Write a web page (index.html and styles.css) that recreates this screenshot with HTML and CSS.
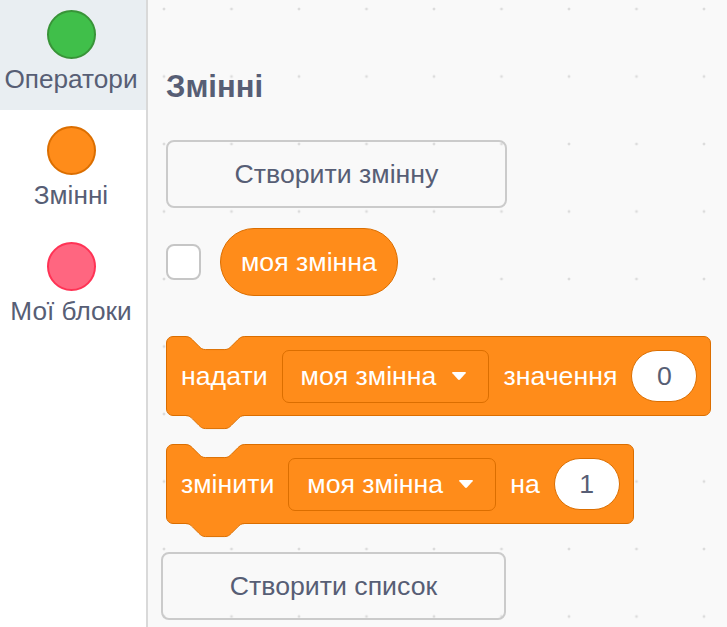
FILE: index.html
```html
<!DOCTYPE html>
<html lang="uk">
<head>
<meta charset="utf-8">
<title>Змінні</title>
<link rel="stylesheet" href="styles.css">
</head>
<body>
<div class="app">
  <nav class="cats">
    <div class="cats-list">
      <div class="cat cat-selected"><span class="dot dot-op"></span><span class="cat-label">Оператори</span></div>
      <div class="cat"><span class="dot dot-var"></span><span class="cat-label">Змінні</span></div>
      <div class="cat"><span class="dot dot-my"></span><span class="cat-label">Мої блоки</span></div>
    </div>
  </nav>
  <main class="palette">
    <h2 class="heading">Змінні</h2>
    <button class="fbtn">Створити змінну</button>
    <div class="var-row">
      <span class="checkbox"></span>
      <span class="reporter">моя змінна</span>
    </div>
    <div class="block">
      <svg class="notch" viewBox="0 -1 36 10" preserveAspectRatio="none"><path class="notch-fill" d="M0,-1 V0 c2,0 3,1 4,2 l4,4 c1,1 2,2 4,2 h12 c2,0 3,-1 4,-2 l4,-4 c1,-1 2,-2 4,-2 V-1 Z"/><path class="edge" d="M0,0 c2,0 3,1 4,2 l4,4 c1,1 2,2 4,2 h12 c2,0 3,-1 4,-2 l4,-4 c1,-1 2,-2 4,-2"/></svg>
      <span class="blabel">надати</span>
      <span class="dropdown">моя змінна<svg class="caret" viewBox="0 0 16 10"><path d="M2,1 H14 Q15.6,1 14.6,2.3 L9.2,8.3 Q8,9.5 6.8,8.3 L1.4,2.3 Q0.4,1 2,1 Z"/></svg></span>
      <span class="blabel">значення</span>
      <span class="num">0</span>
      <svg class="tab" viewBox="0 -1 36 10" preserveAspectRatio="none"><path class="tab-fill" d="M0,-1 V0 c2,0 3,1 4,2 l4,4 c1,1 2,2 4,2 h12 c2,0 3,-1 4,-2 l4,-4 c1,-1 2,-2 4,-2 V-1 Z"/><path class="edge" d="M0,0 c2,0 3,1 4,2 l4,4 c1,1 2,2 4,2 h12 c2,0 3,-1 4,-2 l4,-4 c1,-1 2,-2 4,-2"/></svg>
    </div>
    <div class="block block-change">
      <svg class="notch" viewBox="0 -1 36 10" preserveAspectRatio="none"><path class="notch-fill" d="M0,-1 V0 c2,0 3,1 4,2 l4,4 c1,1 2,2 4,2 h12 c2,0 3,-1 4,-2 l4,-4 c1,-1 2,-2 4,-2 V-1 Z"/><path class="edge" d="M0,0 c2,0 3,1 4,2 l4,4 c1,1 2,2 4,2 h12 c2,0 3,-1 4,-2 l4,-4 c1,-1 2,-2 4,-2"/></svg>
      <span class="blabel">змінити</span>
      <span class="dropdown">моя змінна<svg class="caret" viewBox="0 0 16 10"><path d="M2,1 H14 Q15.6,1 14.6,2.3 L9.2,8.3 Q8,9.5 6.8,8.3 L1.4,2.3 Q0.4,1 2,1 Z"/></svg></span>
      <span class="blabel">на</span>
      <span class="num">1</span>
      <svg class="tab" viewBox="0 -1 36 10" preserveAspectRatio="none"><path class="tab-fill" d="M0,-1 V0 c2,0 3,1 4,2 l4,4 c1,1 2,2 4,2 h12 c2,0 3,-1 4,-2 l4,-4 c1,-1 2,-2 4,-2 V-1 Z"/><path class="edge" d="M0,0 c2,0 3,1 4,2 l4,4 c1,1 2,2 4,2 h12 c2,0 3,-1 4,-2 l4,-4 c1,-1 2,-2 4,-2"/></svg>
    </div>
    <button class="fbtn fbtn-list">Створити список</button>
  </main>
</div>
</body>
</html>
```
FILE: styles.css
```css
* { box-sizing: border-box; }

html, body {
  margin: 0;
  height: 100%;
}

body {
  font-family: "Liberation Sans", Arial, Helvetica, sans-serif;
  color: #575e75;
  overflow: hidden;
}

.app {
  display: flex;
  height: 627px;
  overflow: hidden;
}

/* category sidebar */
.cats {
  flex: none;
  width: 148px;
  background: #ffffff;
  border-right: 2px solid #d9d9d9;
  overflow: hidden;
}

.cats-list {
  margin-top: -6.5px;
}

.cat {
  display: flex;
  flex-direction: column;
  align-items: center;
  padding: 16px 4px 15px 0;
}

.cat-selected {
  background: #e9eef2;
}

.dot {
  width: 49px;
  height: 49px;
  border-radius: 50%;
  border: 2.5px solid;
  margin-bottom: 5px;
}

.dot-op { background: #40bf4a; border-color: #389438; }
.dot-var { background: #ff8c1a; border-color: #db6e00; }
.dot-my { background: #ff6680; border-color: #ff3355; }

.cat-label {
  font-size: 26.2px;
  line-height: 31px;
  color: #575e75;
  white-space: nowrap;
}

/* palette */
.palette {
  flex: 1;
  display: flex;
  flex-direction: column;
  align-items: flex-start;
  padding: 68.5px 0 0 18px;
  background-color: #f9f9f9;
  background-image: radial-gradient(circle, #dcdcdc 0 1px, rgba(220,220,220,0) 1.8px);
  background-size: 67.5px 67.5px;
  background-position: -17.75px -24.75px;
}

.heading {
  margin: 0;
  font-size: 31px;
  line-height: 36px;
  font-weight: bold;
  color: #575e75;
}

.fbtn {
  margin-top: 35.5px;
  width: 341px;
  height: 68px;
  border: 2px solid #cbcbcb;
  border-radius: 8px;
  background: transparent;
  font-family: inherit;
  font-size: 26.7px;
  color: #575e75;
  padding: 0;
}

.fbtn-list {
  margin-top: 28px;
  margin-left: -5px;
  width: 345px;
}

.var-row {
  margin-top: 20px;
  display: flex;
  align-items: center;
  gap: 19px;
}

.checkbox {
  width: 35px;
  height: 36px;
  border: 2px solid #c6c6c6;
  border-radius: 8px;
  background: #ffffff;
}

.reporter {
  display: flex;
  align-items: center;
  height: 68px;
  padding: 0 20px;
  border-radius: 34px;
  background: #ff8c1a;
  border: 1px solid #db6e00;
  color: #ffffff;
  font-size: 26.7px;
  white-space: nowrap;
}

/* stack blocks */
.block {
  position: relative;
  margin-top: 40px;
  display: flex;
  align-items: center;
  gap: 14px;
  height: 80px;
  padding: 0 13px 0 14px;
  background: #ff8c1a;
  border: 1px solid #db6e00;
  border-radius: 7px;
  color: #ffffff;
  font-size: 26.7px;
  white-space: nowrap;
}

.block-change {
  margin-top: 28px;
}

.notch, .tab {
  position: absolute;
  left: 19px;
  width: 58.3px;
  height: 16.2px;
  overflow: visible;
}

.notch { top: -2.1px; }
.tab { top: calc(100% - 1.1px); }

.notch-fill { fill: #f9f9f9; }
.tab-fill { fill: #ff8c1a; }

.edge {
  fill: none;
  stroke: #db6e00;
  stroke-width: 1;
  vector-effect: non-scaling-stroke;
}

.dropdown {
  display: flex;
  align-items: center;
  gap: 15px;
  height: 53px;
  padding: 0 21px 0 18px;
  border: 1px solid #db6e00;
  border-radius: 7px;
  background: #ff8c1a;
}

.caret {
  width: 16px;
  height: 10px;
  fill: #ffffff;
}

.num {
  display: flex;
  align-items: center;
  justify-content: center;
  min-width: 66px;
  height: 52px;
  padding: 0 20px;
  border-radius: 26px;
  background: #ffffff;
  border: 1px solid #db6e00;
  color: #575e75;
}
```
